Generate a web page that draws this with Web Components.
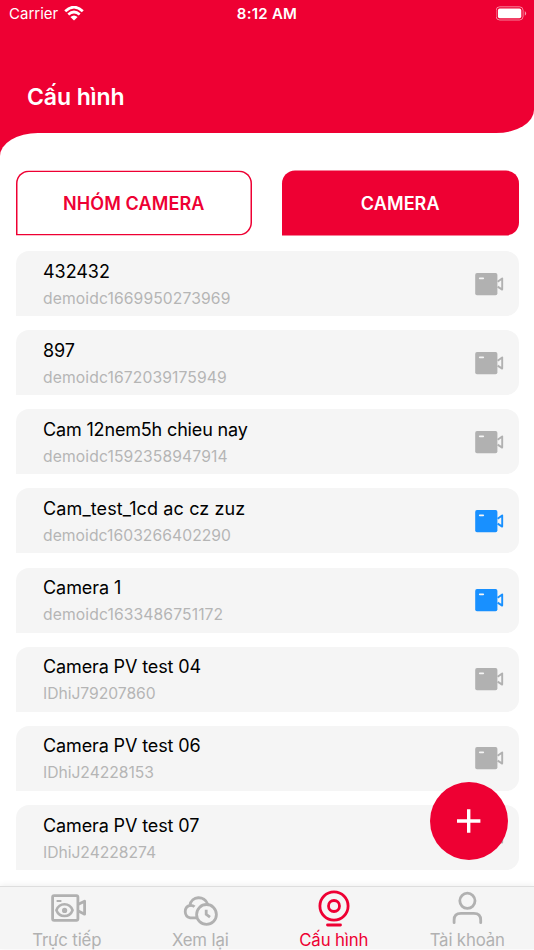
<!DOCTYPE html>
<html lang="vi"><head><meta charset="utf-8"><title>Cấu hình</title>
<style>html,body{margin:0;background:#fff}body{width:534px;height:950px;overflow:hidden;font-family:Inter,"Liberation Sans",sans-serif}</style></head><body>
<camera-app></camera-app>
<script>
const define=(name,html,after)=>customElements.define(name,class extends HTMLElement{
connectedCallback(){if(this.shadowRoot)return;const t=document.createElement('template');t.innerHTML=html;this.attachShadow({mode:'open'}).append(t.content.cloneNode(true));if(after)after(this,this.shadowRoot)}});

define('status-bar',`<style>:host{display:grid;grid-template-columns:1fr auto 1fr;height:28px;align-items:center;color:#fff;font-size:15px;line-height:28px}
.l{display:flex;align-items:center;gap:6px;padding-left:9px;letter-spacing:0}.t{font-weight:600;letter-spacing:.25px}.r{display:flex;justify-content:flex-end;padding-right:7px}svg{display:block;margin-top:-2px}</style>
<div class="l"><span>Carrier</span><svg width="20" height="15" viewBox="0 0 20 15" fill="none" stroke="#fff" stroke-width="2.7"><path d="M1.2 5.3Q10-3 18.8 5.3M4.3 8.5Q10 3.5 15.7 8.5"/><path d="M10 14.5L6.4 11Q10 8 13.6 11Z" fill="#fff" stroke="none"/></svg></div>
<span class="t">8:12 AM</span><div class="r"><svg width="31" height="15" viewBox="0 0 31 15"><rect x=".1" y=".8" width="27" height="13.2" rx="3.6" fill="none" stroke="#fff" stroke-opacity=".5"/><rect x="1.9" y="2.6" width="23.4" height="9.6" rx="1.8" fill="#fff"/><path d="M28.8 5.1Q31.5 7.4 28.8 9.7Z" fill="#fff" fill-opacity=".6"/></svg></div>`);

define('page-header',`<style>:host{display:block;height:156px}
.red{height:133px;background:#ee0033;border-bottom-right-radius:38px 23px}.wrap{background:#fff;height:133px}
h1{margin:0;padding:54px 0 0 27px;font-size:23px;line-height:30px;font-weight:600;letter-spacing:-.1px;color:#fff}
.curve{height:23px;background:linear-gradient(90deg,#ee0033 50%,#fff 50%)}.curve div{height:100%;background:#fff;border-top-left-radius:38px 23px}</style>
<div class="wrap"><div class="red"><status-bar></status-bar><h1><slot></slot></h1></div></div><div class="curve"><div></div></div>`);

define('tab-button',`<style>:host{display:flex;box-sizing:border-box;height:65px;box-shadow:inset 0 0 0 1.5px #ee0033;border-radius:13px 13px 13px 0;align-items:center;justify-content:center;color:#ee0033;font-size:18px;font-weight:600;letter-spacing:.1px;background:#fff;transform:translateY(-.5px)}:host([active]){background:#ee0033;color:#fff;box-shadow:none}</style><slot></slot>`);

define('video-icon',`<style>:host{display:block;color:#b1b1b1}svg{display:block}</style>
<svg width="29" height="23" viewBox="0 0 29 23"><rect x=".2" y=".1" width="22.2" height="22.2" rx="1.8" fill="currentColor"/><path d="M4.8 5.3h3.4" stroke="#f5f5f5" stroke-width="1.8" stroke-linecap="round"/><path d="M22.6 8.8L27.2 5.4V16.6L22.6 13.6" fill="none" stroke="currentColor" stroke-width="1.9" stroke-linejoin="round"/></svg>`);

define('camera-row',`<style>:host{display:flex;height:65px;box-sizing:border-box;background:#f5f5f5;border-radius:13px 13px 13px 0;padding:0 14.7px 0 27.5px;align-items:center;justify-content:space-between}
.n{font-size:18px;line-height:27px;color:#000;letter-spacing:var(--name-spacing,-.06px)}.i{font-size:15.7px;line-height:27px;color:#b5b5b5;letter-spacing:var(--id-spacing,.1px);display:block}.text{padding-top:2.4px}video-icon{margin-top:1px}</style>
<div class="text"><div class="n"><slot></slot></div><span class="i"></span></div><video-icon></video-icon>`,(el,root)=>{root.querySelector('.i').textContent=el.getAttribute('device');if(el.hasAttribute('online'))root.querySelector('video-icon').style.color='#1890ff'});

define('add-button',`<style>:host{display:grid;place-items:center;width:78px;height:78px;border-radius:50%;background:#ee0033}svg{display:block}</style><svg width="24" height="24" viewBox="0 0 24 24" stroke="#fff" stroke-width="3.4"><path d="M0 12h23.4M11.7 .3v23.4"/></svg>`);

const icons={
live:'<rect x="3.6" y="2.7" width="25.3" height="24.6" rx="1.5"/><path d="M28.9 11.6L35.6 8.2V21.2L28.9 17.8" stroke-linejoin="round"/><path d="M7.6 8H12.4" stroke-width="2"/><path d="M7.4 17.2C10.5 9.3 20.5 9.3 23.6 17.2C20.5 25 10.5 25 7.4 17.2Z" stroke-width="2.6" stroke-linejoin="round"/><circle cx="15.6" cy="17.4" r="2.6" fill="currentColor" stroke="none"/>',
replay:'<path d="M15.2 24.8H8.2A6.4 6.4 0 0 1 7.9 12.4C9.2 2.6 22.8 2.2 25.7 11.2"/><path d="M8 12.4Q11 12.3 12.5 13.8"/><circle cx="24.5" cy="21.4" r="9.9"/><path d="M24.2 16.8V21.4L28 24.2"/>',
config:'<circle cx="18" cy="15" r="14.1"/><circle cx="18" cy="15" r="5.5"/><path d="M11.5 34H24.5" stroke-linecap="round"/>',
account:'<circle cx="18.4" cy="7.8" r="7.6"/><path d="M5.1 29.7V27Q5.1 20.4 11.9 20.4H24.9Q31.7 20.4 31.7 27V29.7" stroke-linecap="round"/>'};
define('nav-item',`<style>:host{display:flex;flex-direction:column;align-items:center;color:#b1b1b1;font-size:16.8px;letter-spacing:-.15px}:host([active]){color:#ee0033}svg{display:block;overflow:visible}.label{line-height:24px;white-space:nowrap}</style><svg width="36" height="37" viewBox="0 0 36 37" fill="none" stroke="currentColor" stroke-width="2.8"></svg><span class="label"><slot></slot></span>`,(el,root)=>{const s=root.querySelector('svg'),n=el.getAttribute('icon');s.innerHTML=icons[n];s.style.marginTop=(n==='config'?4:6)+'px';s.style.marginBottom=(n==='config'?0:-2)+'px'});
define('bottom-nav',`<style>:host{display:grid;grid-template-columns:repeat(4,1fr);height:63px;background:#f5f5f5;border-top:1px solid #dedede;box-sizing:border-box;box-shadow:0 -1px 6px #0001;overflow:visible}</style><slot></slot>`);

define('camera-app',`<style>:host{display:block;position:relative;width:534px;height:950px;overflow:hidden;background:#fff}
.tabs{display:grid;grid-template-columns:1fr 1fr;gap:30px;padding:15px 15.5px 0}
.list{display:flex;flex-direction:column;gap:14.14px;padding:15px 15.5px 0}
.wide{--name-spacing:.12px;--id-spacing:.04px}.tight{--name-spacing:-.16px}.pv{--name-spacing:-.12px;--id-spacing:-.04px}
add-button{position:absolute;left:430px;top:782px}bottom-nav{position:absolute;left:0;right:0;top:886px}</style>
<page-header>Cấu hình</page-header>
<div class="tabs"><tab-button>NHÓM CAMERA</tab-button><tab-button active>CAMERA</tab-button></div>
<div class="list">
<camera-row device="demoidc1669950273969">432432</camera-row>
<camera-row device="demoidc1672039175949">897</camera-row>
<camera-row class="tight" device="demoidc1592358947914">Cam 12nem5h chieu nay</camera-row>
<camera-row class="wide" online device="demoidc1603266402290">Cam_test_1cd ac cz zuz</camera-row>
<camera-row online device="demoidc1633486751172">Camera 1</camera-row>
<camera-row class="pv" device="IDhiJ79207860">Camera PV test 04</camera-row>
<camera-row class="pv" device="IDhiJ24228153">Camera PV test 06</camera-row>
<camera-row class="pv" device="IDhiJ24228274">Camera PV test 07</camera-row>
</div><add-button></add-button>
<bottom-nav><nav-item icon="live">Trực tiếp</nav-item><nav-item icon="replay">Xem lại</nav-item><nav-item icon="config" active>Cấu hình</nav-item><nav-item icon="account">Tài khoản</nav-item></bottom-nav>`);
</script></body></html>
